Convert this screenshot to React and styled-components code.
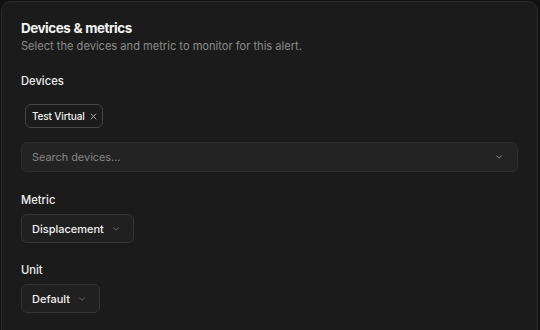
import React from "react";
import styled, { createGlobalStyle } from "styled-components";

const Global = createGlobalStyle`
  html, body { margin: 0; padding: 0; background: #111111; }
  body { font-family: Inter, "Noto Sans", sans-serif; -webkit-font-smoothing: antialiased; }
  * { box-sizing: border-box; }
`;

const Page = styled.div`
  width: 540px;
  height: 330px;
  padding: 1px 2px 0 1px;
  overflow: hidden;
`;

const Card = styled.section`
  background: #1b1b1b;
  border: 1px solid #2c2c2c;
  border-radius: 10px;
  padding: 17px 19px 40px 19px;
  height: 360px;
  display: flex;
  flex-direction: column;
  color: #ededed;
`;

const Title = styled.h2`
  margin: 0;
  font-size: 13.4px;
  font-weight: 700;
  letter-spacing: -0.45px;
  word-spacing: 0.5px;
  line-height: 18px;
  color: #f2f2f2;
`;

const Subtitle = styled.p`
  margin: 1px 0 0;
  font-size: 11.1px;
  line-height: 16px;
  color: #8b8b8b;
`;

const Field = styled.div`
  display: flex;
  flex-direction: column;
  margin-top: ${(p) => p.$mt}px;
`;

const Label = styled.label`
  font-size: 11.2px;
  font-weight: 500;
  line-height: 16px;
  color: #eeeeee;
`;

const Chips = styled.div`
  display: flex;
  gap: 6px;
  padding: 0 4px;
  margin-top: 15px;
`;

const Chip = styled.span`
  display: inline-flex;
  align-items: center;
  gap: 5px;
  height: 24px;
  padding: 0 5px 0 6px;
  border: 1px solid #474747;
  border-radius: 6px;
  font-size: 10px;
  font-weight: 500;
  letter-spacing: -0.15px;
  color: #f0f0f0;
`;

const Remove = styled.svg`
  width: 7px;
  height: 7px;
  flex: none;
`;

const SearchBox = styled.div`
  margin-top: 14px;
  height: 30px;
  display: flex;
  align-items: center;
  justify-content: space-between;
  padding: 0 13px 0 10px;
  background: #232323;
  border: 1px solid #2d2d2d;
  border-radius: 6px;
  font-size: 10.9px;
  color: #868686;
`;

const Select = styled.div`
  margin-top: 6px;
  align-self: flex-start;
  height: 29px;
  display: inline-flex;
  align-items: center;
  gap: 7px;
  padding: 0 12px 0 10px;
  background: #202020;
  border: 1px solid #353535;
  border-radius: 6px;
  font-size: 11px;
  font-weight: 500;
  color: #f0f0f0;
`;

const Chevron = ({ color = "#8a8a8a" }) => (
  <svg width="10" height="10" viewBox="0 0 24 24" fill="none" stroke={color} strokeWidth="2.2" strokeLinecap="round" strokeLinejoin="round">
    <path d="M6 9l6 6 6-6" />
  </svg>
);

export default function App() {
  return (
    <>
      <Global />
      <Page>
        <Card>
          <Title>Devices &amp; metrics</Title>
          <Subtitle>Select the devices and metric to monitor for this alert.</Subtitle>
          <Field $mt={19}>
            <Label>Devices</Label>
            <Chips>
              <Chip>
                Test Virtual
                <Remove viewBox="0 0 10 10" fill="none" stroke="#bdbdbd" strokeWidth="1.3" strokeLinecap="round">
                  <path d="M1.5 1.5l7 7M8.5 1.5l-7 7" />
                </Remove>
              </Chip>
            </Chips>
            <SearchBox>
              <span>Search devices...</span>
              <Chevron color="#9a9a9a" />
            </SearchBox>
          </Field>
          <Field $mt={20}>
            <Label>Metric</Label>
            <Select>
              Displacement <Chevron color="#6e6e6e" />
            </Select>
          </Field>
          <Field $mt={19}>
            <Label>Unit</Label>
            <Select>
              Default <Chevron color="#6e6e6e" />
            </Select>
          </Field>
        </Card>
      </Page>
    </>
  );
}
